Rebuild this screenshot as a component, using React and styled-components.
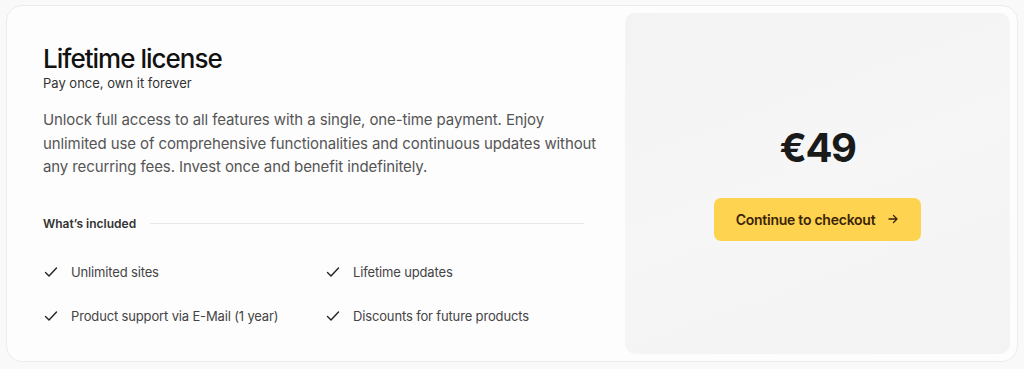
import React from 'react';
import styled, { createGlobalStyle } from 'styled-components';

const GlobalStyle = createGlobalStyle`
  body {
    margin: 0;
    background: #f9f9f9;
    font-family: Inter, "Noto Sans", sans-serif;
    -webkit-font-smoothing: antialiased;
  }
`;

const Page = styled.div`
  padding: 5px 6px 0 6px;
`;

const Card = styled.div`
  width: 1012px;
  height: 357px;
  box-sizing: border-box;
  background: #fdfdfd;
  border: 1px solid #ececec;
  border-radius: 16px;
  padding: 7px;
  display: grid;
  grid-template-columns: minmax(0, 1fr) 385px;
`;

const Info = styled.div`
  padding: 30px 41px 0 29px;
`;

const Title = styled.h2`
  margin: 0;
  font-size: 26px;
  line-height: 31px;
  font-weight: 500;
  letter-spacing: -1px;
  color: #111;
`;

const Subtitle = styled.p`
  margin: 0;
  font-size: 13px;
  line-height: 18px;
  color: #333;
`;

const Description = styled.p`
  margin: 16px -20px 0 0;
  font-size: 15px;
  line-height: 23.5px;
  letter-spacing: -0.1px;
  color: #555;
`;

const SectionHead = styled.div`
  display: flex;
  align-items: center;
  gap: 14px;
  margin-top: 37px;
  font-size: 12px;
  font-weight: 600;
  color: #333;

  &::after {
    content: '';
    flex: 1;
    height: 1px;
    background: #e8e8e8;
  }
`;

const Features = styled.ul`
  list-style: none;
  margin: 32px 0 0;
  padding: 0;
  display: grid;
  grid-template-columns: 282px 1fr;
  row-gap: 26px;
`;

const Feature = styled.li`
  display: flex;
  align-items: center;
  gap: 13px;
  font-size: 13px;
  line-height: 18px;
  letter-spacing: -0.15px;
  color: #444;
  padding-left: 1px;
`;

const PricePanel = styled.div`
  border-radius: 10px;
  background: linear-gradient(160deg, #f3f3f3 0%, #f6f6f6 50%, #f3f3f3 100%);
  display: flex;
  flex-direction: column;
  align-items: center;
  justify-content: center;
  gap: 27px;
  padding-bottom: 2px;
`;

const Price = styled.div`
  font-size: 40px;
  line-height: 46px;
  font-weight: 700;
  letter-spacing: -1.5px;
  color: #1a1a1a;
`;

const CheckoutButton = styled.button`
  display: flex;
  align-items: center;
  gap: 12px;
  height: 43px;
  padding: 0 22px;
  border: none;
  border-radius: 7px;
  background: #fed350;
  color: #3a2408;
  font-family: inherit;
  font-size: 14px;
  font-weight: 600;
  letter-spacing: -0.25px;
  cursor: pointer;
`;

const Check = () => (
  <svg width="14" height="14" viewBox="0 0 14 14" fill="none">
    <path d="M1.5 7.5 L5 11 L12.5 3" stroke="#222" strokeWidth="1.4" strokeLinecap="round" strokeLinejoin="round" />
  </svg>
);

const Arrow = () => (
  <svg width="12" height="12" viewBox="0 0 12 12" fill="none">
    <path d="M2 6 H10 M6.5 2.5 L10 6 L6.5 9.5" stroke="#3a2408" strokeWidth="1.3" strokeLinecap="round" strokeLinejoin="round" />
  </svg>
);

const features = [
  'Unlimited sites',
  'Lifetime updates',
  'Product support via E-Mail (1 year)',
  'Discounts for future products',
];

const App = () => {
  return (
    <Page>
      <GlobalStyle />
      <Card>
        <Info>
          <Title>Lifetime license</Title>
          <Subtitle>Pay once, own it forever</Subtitle>
          <Description>
            Unlock full access to all features with a single, one-time payment. Enjoy unlimited use of
            comprehensive functionalities and continuous updates without any recurring fees. Invest once
            and benefit indefinitely.
          </Description>
          <SectionHead>What’s included</SectionHead>
          <Features>
            {features.map((f) => (
              <Feature key={f}>
                <Check />
                {f}
              </Feature>
            ))}
          </Features>
        </Info>
        <PricePanel>
          <Price>€49</Price>
          <CheckoutButton>
            Continue to checkout
            <Arrow />
          </CheckoutButton>
        </PricePanel>
      </Card>
    </Page>
  );
};

export default App;
